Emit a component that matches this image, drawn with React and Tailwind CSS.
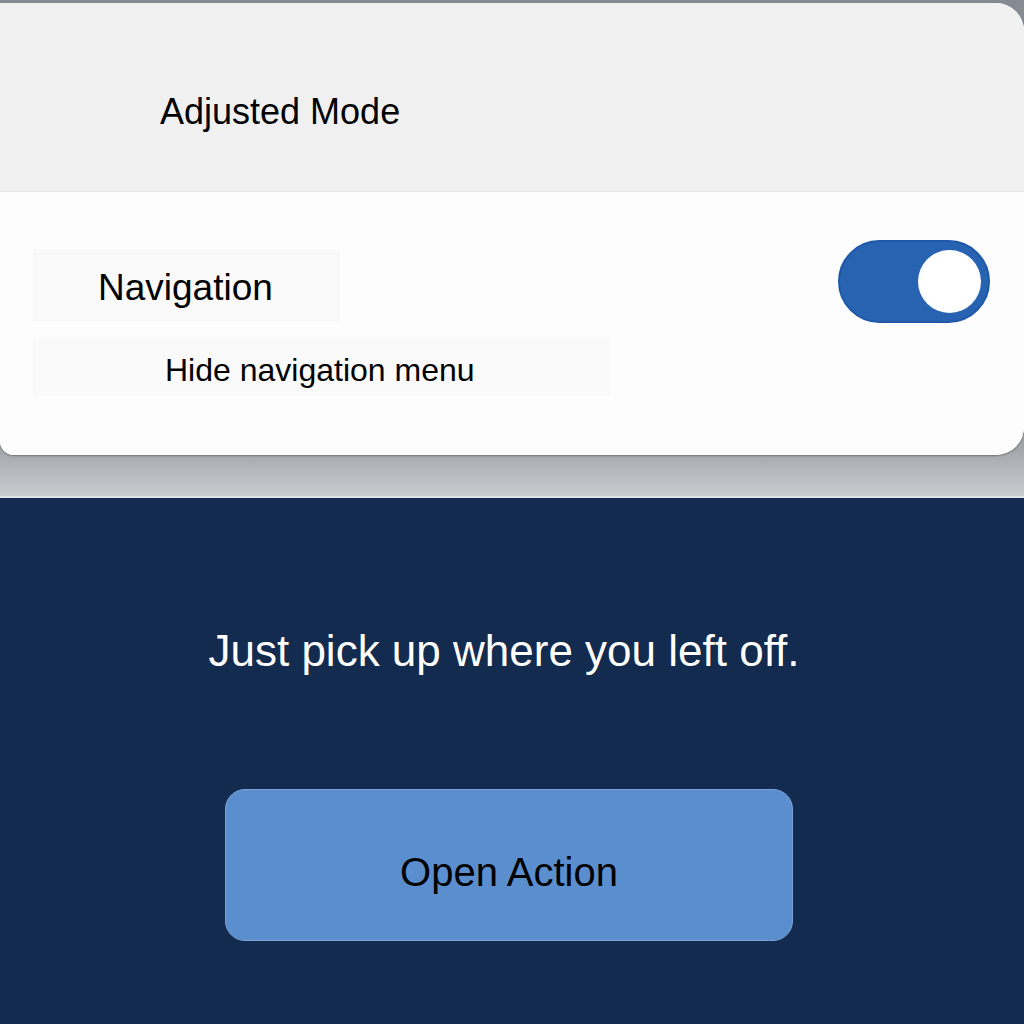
export default function App() {
  return (
    <div className="w-[1024px] h-[1024px] flex flex-col overflow-hidden" style={{ fontFamily: '"Liberation Sans", Arial, sans-serif' }}>
      {/* ── Settings sheet ── */}
      <div className="h-[498px] flex-shrink-0 pt-[3px] bg-[#858b93] flex flex-col">
        <div className="h-[452px] flex-shrink-0 bg-white rounded-tr-[28px] rounded-br-[28px] rounded-bl-[14px] overflow-hidden flex flex-col shadow-[0_1px_2px_rgba(0,0,0,0.35)] relative z-10">
          <div className="h-[189px] flex-shrink-0 bg-[#f1f1f1] border-b border-[#e8e8e8] pl-[38px] pt-[78px]">
            <div className="w-[480px] h-[62px] bg-[#f0f0f0] flex items-center pl-[122px] text-[36px] text-black">
              Adjusted Mode
            </div>
          </div>
          <div className="flex-1 bg-[#fdfdfd] flex flex-col pl-[33px] pt-[57px] relative">
            <div className="w-[307px] h-[72px] bg-[#f9f9f9] flex items-center pl-[65px] pt-[6px] text-[37px] text-black">
              Navigation
            </div>
            <div className="mt-[16px] w-[577px] h-[59px] bg-[#fafafa] flex items-center pl-[132px] pt-[6px] text-[32px] text-black">
              Hide navigation menu
            </div>
            <div className="absolute right-[34px] top-[48px] w-[152px] h-[83px] rounded-full bg-[#2863b2] border-2 border-[#1f58a8] flex items-center justify-end pr-[7px]">
              <div className="w-[63px] h-[63px] rounded-full bg-white" />
            </div>
          </div>
        </div>
        <div className="flex-1 -mt-[20px] pt-[20px] bg-gradient-to-b from-[#999da3] to-[#c8cbce]" />
        <div className="h-[2px] bg-[#e2e5e8]" />
      </div>

      {/* ── Resume panel ── */}
      <div className="flex-1 bg-[#132b4e] flex flex-col items-center pt-[128px]">
        <div className="text-[44px] text-white leading-[50px] -ml-[16px]">Just pick up where you left off.</div>
        <button className="mt-[113px] w-[568px] h-[152px] rounded-[20px] bg-[#5b8ecf] border border-[#7aa3da] text-[40px] text-black flex items-center justify-center pt-[14px] -ml-[6px]">
          Open Action
        </button>
      </div>
    </div>
  );
}
